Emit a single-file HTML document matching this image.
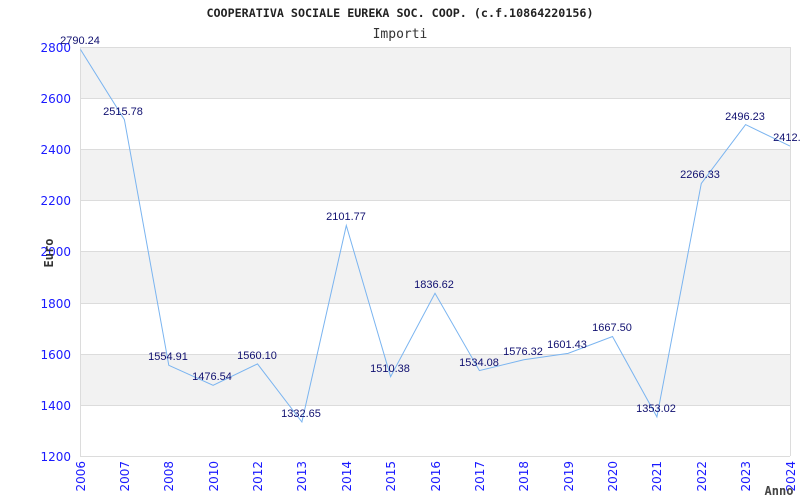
<!DOCTYPE html>
<html><head><meta charset="utf-8"><style>body{margin:0;background:#fff}svg{display:block}</style></head><body>
<svg width="800" height="500" xmlns="http://www.w3.org/2000/svg">
<rect width="800" height="500" fill="#fff"/>
<g fill="#f2f2f2">
<rect x="80" y="47" width="710" height="51"/>
<rect x="80" y="149" width="710" height="51"/>
<rect x="80" y="251" width="710" height="52"/>
<rect x="80" y="354" width="710" height="51"/>
</g>
<g stroke="#dcdcdc" stroke-width="1">
<line x1="80" y1="47.5" x2="790" y2="47.5"/>
<line x1="80" y1="98.5" x2="790" y2="98.5"/>
<line x1="80" y1="149.5" x2="790" y2="149.5"/>
<line x1="80" y1="200.5" x2="790" y2="200.5"/>
<line x1="80" y1="251.5" x2="790" y2="251.5"/>
<line x1="80" y1="303.5" x2="790" y2="303.5"/>
<line x1="80" y1="354.5" x2="790" y2="354.5"/>
<line x1="80" y1="405.5" x2="790" y2="405.5"/>
<line x1="80" y1="456.5" x2="790" y2="456.5"/>
<line x1="80.5" y1="47" x2="80.5" y2="456"/>
<line x1="790.5" y1="47" x2="790.5" y2="456"/>
</g>
<text x="400" y="17" text-anchor="middle" font-family="'DejaVu Sans Mono','Liberation Mono',monospace" font-size="11.7" font-weight="bold" fill="#222">COOPERATIVA SOCIALE EUREKA SOC. COOP. (c.f.10864220156)</text>
<text x="400" y="38" text-anchor="middle" font-family="'DejaVu Sans Mono','Liberation Mono',monospace" font-size="13" fill="#333">Importi</text>
<g font-family="'DejaVu Sans',sans-serif" font-size="12" fill="#1a1aff" text-anchor="end">
<text x="71" y="52">2800</text><text x="71" y="103">2600</text><text x="71" y="154">2400</text><text x="71" y="205">2200</text><text x="71" y="256">2000</text><text x="71" y="308">1800</text><text x="71" y="359">1600</text><text x="71" y="410">1400</text><text x="71" y="461">1200</text>
</g>
<text transform="translate(53,253) rotate(-90)" text-anchor="middle" font-family="'DejaVu Sans Mono',monospace" font-size="12" font-weight="bold" fill="#333">Euro</text>
<text x="779" y="495" text-anchor="middle" font-family="'DejaVu Sans Mono',monospace" font-size="12" font-weight="bold" fill="#444">Anno</text>
<g font-family="'DejaVu Sans',sans-serif" font-size="12" fill="#1a1aff" text-anchor="end">
<text transform="translate(85,461) rotate(-90)">2006</text>
<text transform="translate(129,461) rotate(-90)">2007</text>
<text transform="translate(173,461) rotate(-90)">2008</text>
<text transform="translate(218,461) rotate(-90)">2010</text>
<text transform="translate(262,461) rotate(-90)">2012</text>
<text transform="translate(306,461) rotate(-90)">2013</text>
<text transform="translate(351,461) rotate(-90)">2014</text>
<text transform="translate(395,461) rotate(-90)">2015</text>
<text transform="translate(440,461) rotate(-90)">2016</text>
<text transform="translate(484,461) rotate(-90)">2017</text>
<text transform="translate(528,461) rotate(-90)">2018</text>
<text transform="translate(573,461) rotate(-90)">2019</text>
<text transform="translate(617,461) rotate(-90)">2020</text>
<text transform="translate(661,461) rotate(-90)">2021</text>
<text transform="translate(706,461) rotate(-90)">2022</text>
<text transform="translate(750,461) rotate(-90)">2023</text>
<text transform="translate(795,461) rotate(-90)">2024</text>
</g>
<polyline fill="none" stroke="#7ab4f0" stroke-width="1" points="80.5,49.5 124.4,119.7 168.8,365.3 213.1,385.3 257.5,363.9 301.9,422 346.3,225.5 390.6,376.7 435,293.3 479.4,370.6 523.8,359.8 568.1,353.4 612.5,336.5 656.9,416.9 701.3,183.4 745.6,124.6 790,146.1"/>
<g font-family="'Liberation Sans',Arial,sans-serif" font-size="11" fill="#101070" text-anchor="middle">
<text x="80" y="44">2790.24</text>
<text x="123" y="115">2515.78</text>
<text x="168" y="360">1554.91</text>
<text x="212" y="380">1476.54</text>
<text x="257" y="359">1560.10</text>
<text x="301" y="417">1332.65</text>
<text x="346" y="220">2101.77</text>
<text x="390" y="372">1510.38</text>
<text x="434" y="288">1836.62</text>
<text x="479" y="366">1534.08</text>
<text x="523" y="355">1576.32</text>
<text x="567" y="348">1601.43</text>
<text x="612" y="331">1667.50</text>
<text x="656" y="412">1353.02</text>
<text x="700" y="178">2266.33</text>
<text x="745" y="120">2496.23</text>
<text x="790" y="141">2412.5</text>
</g>
</svg>
</body></html>
